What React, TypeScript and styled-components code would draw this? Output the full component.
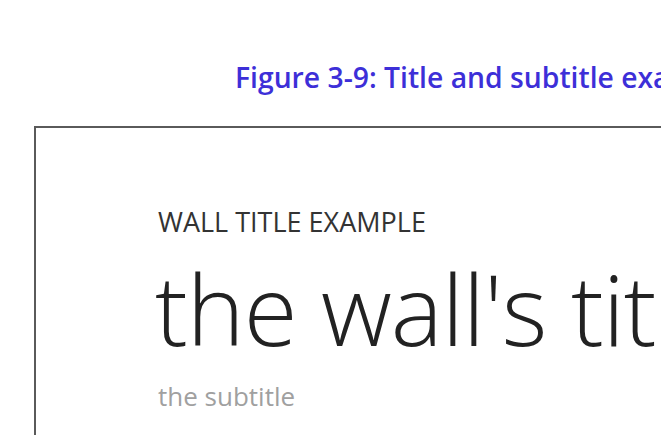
import React from 'react';
import styled, { createGlobalStyle } from 'styled-components';

const GlobalStyle = createGlobalStyle`
  html, body {
    margin: 0;
    padding: 0;
    background: #ffffff;
    overflow: hidden;
  }
  body {
    font-family: "Open Sans", "Noto Sans", sans-serif;
  }
`;

const Page = styled.div`
  width: 661px;
  height: 435px;
  overflow: hidden;
  display: flex;
  flex-direction: column;
  padding-top: 57px;
  box-sizing: border-box;
`;

const Caption = styled.div`
  margin-left: 235px;
  font-size: 28.3px;
  font-weight: 600;
  color: #3d2fd8;
  white-space: nowrap;
  line-height: 40px;
`;

const Frame = styled.div`
  margin-top: 29px;
  margin-left: 34px;
  width: 700px;
  height: 420px;
  flex-shrink: 0;
  border: 2px solid #5a5a5a;
  padding: 76px 0 0 122px;
  box-sizing: border-box;
  display: flex;
  flex-direction: column;
`;

const Label = styled.div`
  font-size: 27px;
  color: #333333;
  white-space: nowrap;
  line-height: 36px;
`;

const Heading = styled.div`
  font-size: 98px;
  font-weight: 350;
  letter-spacing: -1px;
  color: #222222;
  white-space: nowrap;
  line-height: 120px;
  margin-left: -3px;
  margin-top: 8px;
`;

const Sub = styled.div`
  font-size: 26px;
  color: #a0a0a0;
  white-space: nowrap;
  line-height: 36px;
  margin-top: 10px;
`;

const App = () => (
  <Page>
    <GlobalStyle />
    <Caption>Figure 3-9: Title and subtitle example</Caption>
    <Frame>
      <Label>WALL TITLE EXAMPLE</Label>
      <Heading>the wall's title</Heading>
      <Sub>the subtitle</Sub>
    </Frame>
  </Page>
);

export default App;
